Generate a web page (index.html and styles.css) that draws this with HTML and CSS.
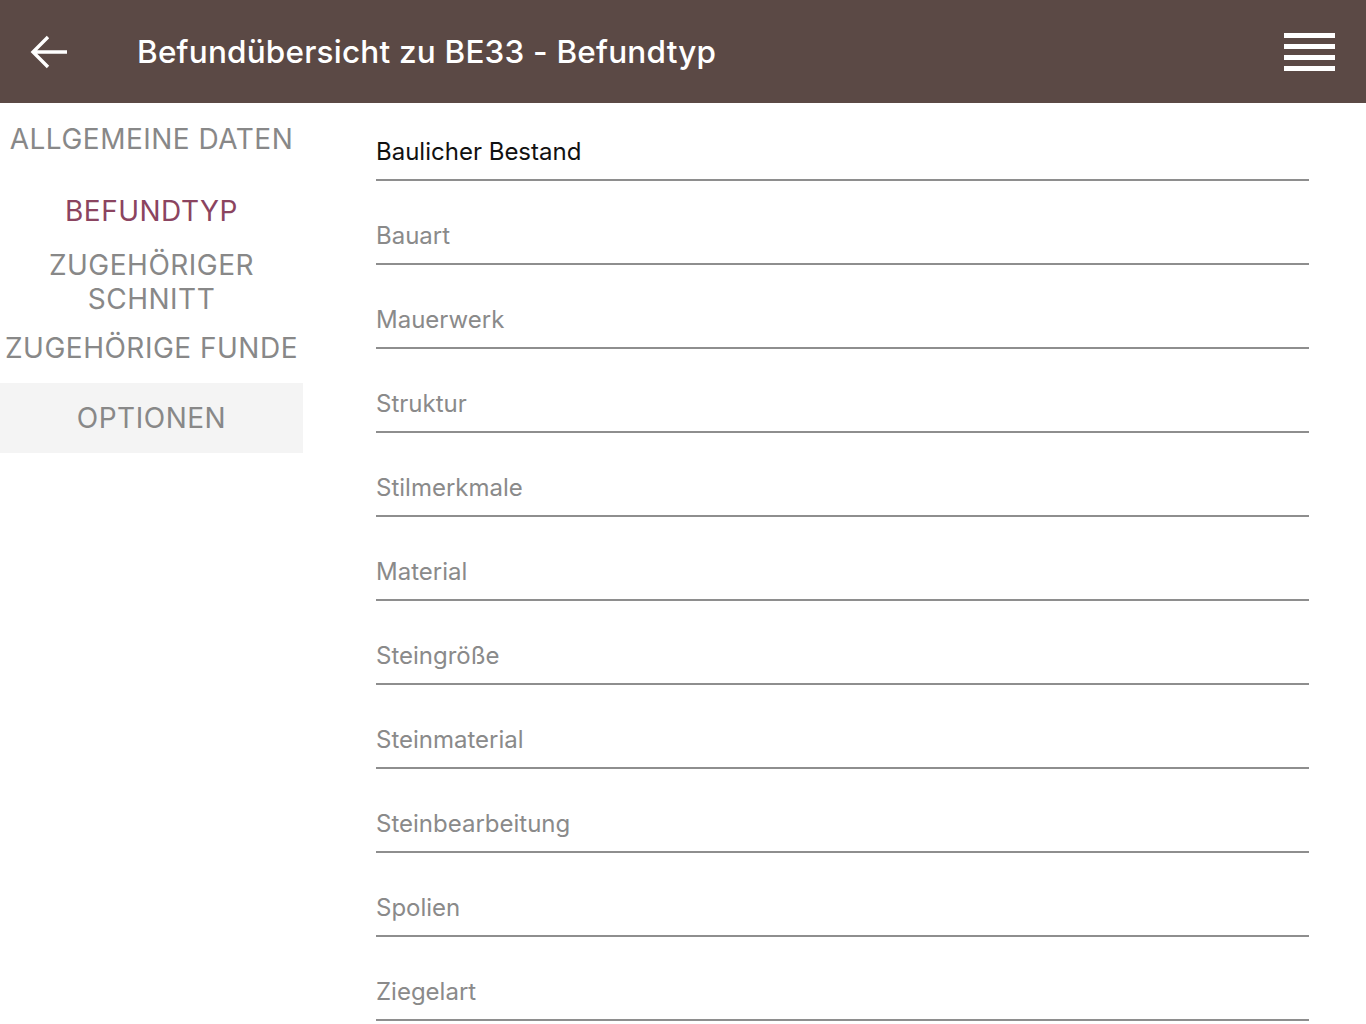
FILE: index.html
```html
<!DOCTYPE html>
<html lang="de">
<head>
<meta charset="utf-8">
<title>Befundübersicht</title>
<link rel="stylesheet" href="styles.css">
</head>
<body>
<header class="topbar">
  <button class="back" aria-label="Zurück">
    <svg width="40" height="40" viewBox="0 0 40 40"><path d="M38 20 H5 M19 5 L4 20 L19 35" fill="none" stroke="#fff" stroke-width="3.4" stroke-linecap="butt" stroke-linejoin="miter"/></svg>
  </button>
  <h1 class="title">Befundübersicht zu BE33 - Befundtyp</h1>
  <button class="menu" aria-label="Menü">
    <span></span><span></span><span></span><span></span>
  </button>
</header>
<div class="layout">
  <nav class="sidebar">
    <div class="nav-item nav-head">ALLGEMEINE DATEN</div>
    <div class="nav-item nav-active">BEFUNDTYP</div>
    <div class="nav-item nav-two">ZUGEHÖRIGER<br>SCHNITT</div>
    <div class="nav-item nav-funde">ZUGEHÖRIGE FUNDE</div>
    <div class="nav-item nav-options">OPTIONEN</div>
  </nav>
  <main class="fields">
    <div class="field"><span class="value">Baulicher Bestand</span></div>
    <div class="field"><span class="label">Bauart</span></div>
    <div class="field"><span class="label">Mauerwerk</span></div>
    <div class="field"><span class="label">Struktur</span></div>
    <div class="field"><span class="label">Stilmerkmale</span></div>
    <div class="field"><span class="label">Material</span></div>
    <div class="field"><span class="label">Steingröße</span></div>
    <div class="field"><span class="label">Steinmaterial</span></div>
    <div class="field"><span class="label">Steinbearbeitung</span></div>
    <div class="field"><span class="label">Spolien</span></div>
    <div class="field"><span class="label">Ziegelart</span></div>
  </main>
</div>
</body>
</html>
```
FILE: styles.css
```css
* { box-sizing: border-box; }
html, body { margin: 0; padding: 0; }
body {
  font-family: Inter, "Noto Sans", "Liberation Sans", sans-serif;
  background: #fff;
  width: 1366px;
  height: 1024px;
  overflow: hidden;
}
.topbar {
  height: 103px;
  background: #5b4945;
  display: flex;
  align-items: center;
  padding: 0 31px 0 29px;
}
.back {
  background: none;
  border: 0;
  padding: 0;
  width: 40px;
  height: 40px;
  display: flex;
}
.title {
  margin: 0 0 0 68px;
  font-size: 31.5px;
  font-weight: 500;
  color: #fff;
  flex: 1;
  letter-spacing: 0.2px;
}
.menu {
  background: none;
  border: 0;
  padding: 0;
  width: 51px;
  display: flex;
  flex-direction: column;
  gap: 6px;
  margin-top: 1px;
}
.menu span {
  display: block;
  height: 5px;
  background: #fff;
}
.layout {
  display: flex;
}
.sidebar {
  width: 303px;
  flex: none;
  padding-top: 19px;
}
.nav-item {
  font-size: 28px;
  line-height: 34px;
  color: #888;
  text-align: center;
  letter-spacing: 0.5px;
}
.nav-active { color: #8b4460; margin-top: 38px; }
.nav-two { margin-top: 20px; }
.nav-funde { margin-top: 15px; }
.nav-options {
  margin-top: 18px;
  background: #f4f4f4;
  height: 70px;
  padding-top: 18px;
}
.fields {
  flex: 1;
  padding-left: 73px;
  padding-right: 57px;
  display: flex;
  flex-direction: column;
  gap: 6px;
}
.field {
  height: 78px;
  border-bottom: 2px solid #8e8e8e;
  display: flex;
  align-items: flex-end;
  padding-bottom: 13px;
  font-size: 24px;
  line-height: 28px;
}
.value { color: #111; }
.label { color: #8a8a8a; }
```
